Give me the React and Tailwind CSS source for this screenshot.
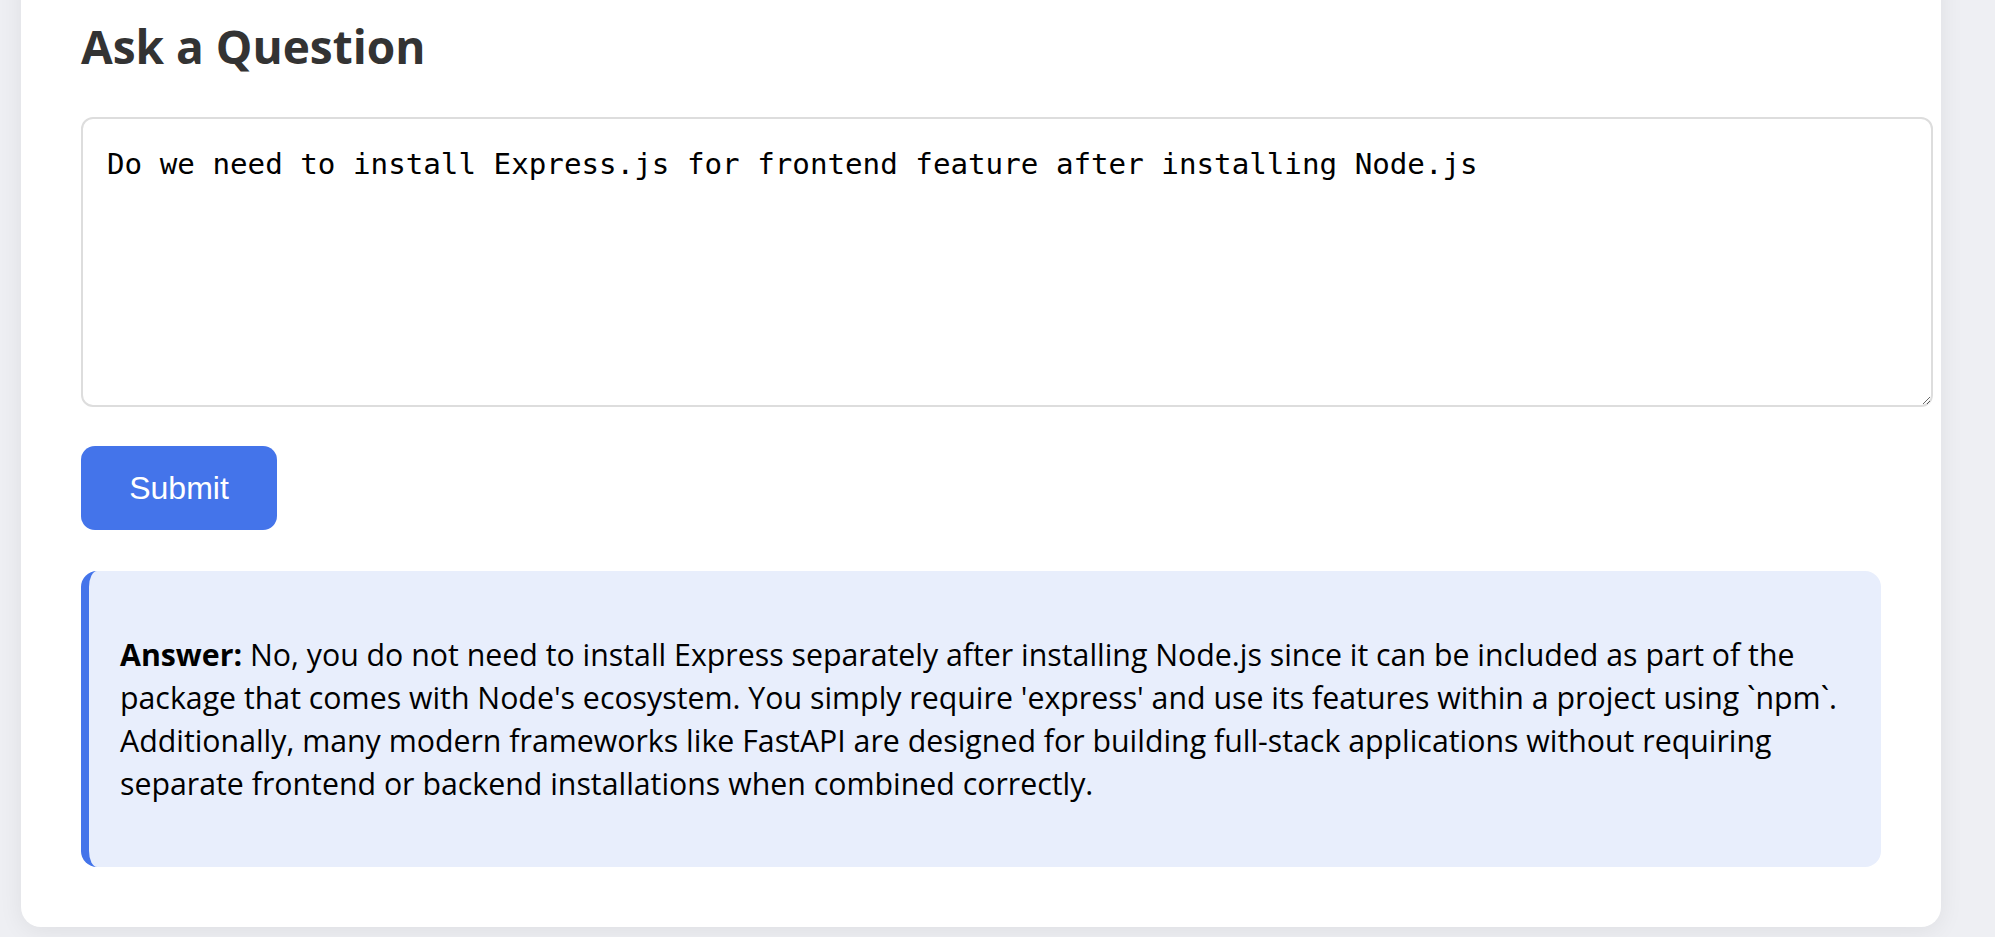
import { useState } from "react";

const ANSWER_TEXT =
  "No, you do not need to install Express separately after installing Node.js since it can be included as part of the package that comes with Node's ecosystem. You simply require 'express' and use its features within a project using `npm`. Additionally, many modern frameworks like FastAPI are designed for building full-stack applications without requiring separate frontend or backend installations when combined correctly.";

export default function App() {
  const [question, setQuestion] = useState(
    "Do we need to install Express.js for frontend feature after installing Node.js"
  );
  const [answer] = useState(ANSWER_TEXT);

  return (
    <div className="min-h-screen overflow-hidden bg-[#eeeff3] pl-[21px] pr-[54px] pb-[10px] font-['Open_Sans',sans-serif]">
      <div className="-mt-[40px] rounded-[20px] bg-white px-[60px] pt-[63px] pb-[60px] shadow-[0_4px_24px_rgba(0,0,0,0.07)]">
        {/* 見出し */}
        <h1 className="text-[46px] font-bold leading-none text-[#333333]">
          Ask a Question
        </h1>

        <textarea
          value={question}
          onChange={(e) => setQuestion(e.target.value)}
          className="mt-[48px] box-content block h-[238px] w-full resize-y rounded-[12px] border-2 border-[#dddddd] p-[24px] font-['DejaVu_Sans_Mono',monospace] text-[29.2px] leading-normal text-black outline-none"
        />

        <button
          type="button"
          className="mt-[39px] flex h-[84px] w-[196px] items-center justify-center rounded-[14px] bg-[#4474ea] font-['Liberation_Sans',Arial,sans-serif] text-[32px] text-white"
        >
          Submit
        </button>

        {/* 回答 */}
        <div className="mt-[41px] rounded-[16px] border-l-[8px] border-[#4474ea] bg-[#e8eefc] py-[38px] pl-[31px] pr-[20px]">
          <p className="my-[24px] text-[30.3px] leading-[43px] text-black">
            <strong className="font-bold">Answer:</strong> {answer}
          </p>
        </div>
      </div>
    </div>
  );
}
